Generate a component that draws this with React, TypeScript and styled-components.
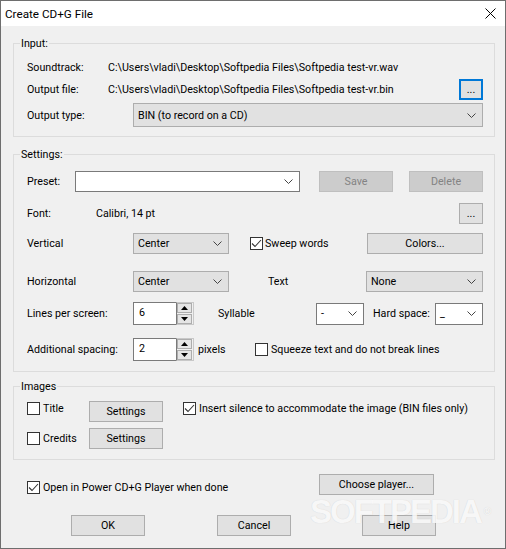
import React from "react";
import styled, { createGlobalStyle } from "styled-components";

const GlobalStyle = createGlobalStyle`
  html, body {
    margin: 0;
    padding: 0;
    background: #f0f0f0;
  }
  body {
    font-family: Roboto, "Liberation Sans", Arial, sans-serif;
    font-size: 10.7px;
    color: #000;
  }
  * {
    box-sizing: border-box;
  }
`;

const Window = styled.div`
  position: relative;
  width: 506px;
  height: 549px;
  border: 1px solid #6e6e6e;
  background: #f0f0f0;
  display: flex;
  flex-direction: column;
  overflow: hidden;
`;

const TitleBar = styled.div`
  height: 25px;
  flex: none;
  background: #fff;
  display: flex;
  align-items: center;
  justify-content: space-between;
  padding: 0 9px 0 4px;
  font-size: 11.7px;
`;

const Body = styled.div`
  padding: 10px 10px 0 12px;
  display: flex;
  flex-direction: column;
`;

const Group = styled.fieldset<{ $mt?: number }>`
  margin: ${(p) => p.$mt ?? 0}px 0 0;
  padding: 0 11px 0 6px;
  border: 1px solid #dcdcdc;
  min-width: 0;
`;

const Legend = styled.legend`
  padding: 0 1px;
  height: 15px;
  line-height: 15px;
`;

const Content = styled.div<{ $pt: number; $pb: number }>`
  padding: ${(p) => p.$pt}px 0 ${(p) => p.$pb}px 7px;
  display: flex;
  flex-direction: column;
`;

const Row = styled.div<{ $h: number; $mt?: number; $align?: string }>`
  display: flex;
  align-items: ${(p) => p.$align ?? "center"};
  height: ${(p) => p.$h}px;
  margin-top: ${(p) => p.$mt ?? 0}px;
`;

const Slot = styled.div<{ $w?: number; $ml?: number }>`
  flex: ${(p) => (p.$w ? "0 0 auto" : "1 1 auto")};
  width: ${(p) => (p.$w ? `${p.$w}px` : "auto")};
  margin-left: ${(p) => p.$ml ?? 0}px;
  white-space: nowrap;
  display: flex;
  align-items: center;
`;

const Footer = styled.div`
  padding-left: 14px;
  display: flex;
  flex-direction: column;
`;

const Button = styled.button<{ $w: number; $ml?: number; $focus?: boolean }>`
  flex: none;
  width: ${(p) => p.$w}px;
  height: 21px;
  margin: 0 0 0 ${(p) => p.$ml ?? 0}px;
  padding: 0;
  font: inherit;
  color: #000;
  background: #e1e1e1;
  border: ${(p) => (p.$focus ? "2px solid #0078d7" : "1px solid #adadad")};
  &:disabled {
    background: #cccccc;
    border-color: #bfbfbf;
    color: #838383;
  }
`;

const Combo = styled.div<{ $w?: number; $h?: number; $white?: boolean }>`
  flex: ${(p) => (p.$w ? "none" : "1 1 auto")};
  width: ${(p) => (p.$w ? `${p.$w}px` : "auto")};
  height: ${(p) => p.$h ?? 21}px;
  display: flex;
  align-items: center;
  justify-content: space-between;
  padding: 0 6px 0 4px;
  background: ${(p) => (p.$white ? "#fff" : "#e1e1e1")};
  border: 1px solid ${(p) => (p.$white ? "#7a7a7a" : "#adadad")};
`;

const Spinner = styled.div`
  flex: none;
  width: 61px;
  height: 23px;
  display: flex;
`;

const SpinField = styled.div`
  flex: 1;
  border: 1px solid #7a7a7a;
  border-right: none;
  background: #fff;
  padding: 3px 0 0 5px;
`;

const SpinArrows = styled.div`
  width: 18px;
  display: flex;
  flex-direction: column;
  gap: 1px;
  padding: 0 1px 0 0;
  border: 1px solid #c8c8c8;
  border-left: 1px solid #7a7a7a;
  background: #f0f0f0;
`;

const SpinButton = styled.div`
  flex: 1;
  display: flex;
  align-items: center;
  justify-content: center;
  background: #e5e5e5;
  border: 1px solid #adadad;
`;

const CheckLabel = styled.label<{ $gap?: number }>`
  display: flex;
  align-items: center;
  gap: ${(p) => p.$gap ?? 3}px;
  height: 15px;
  white-space: nowrap;
`;

const Box = styled.span`
  width: 13px;
  height: 13px;
  flex: none;
  border: 1px solid #333;
  background: #fff;
  display: flex;
  align-items: center;
  justify-content: center;
`;

const Watermark = styled.div`
  position: absolute;
  left: 309px;
  top: 494px;
  font-family: "Liberation Sans", Arial, sans-serif;
  font-weight: bold;
  font-size: 33px;
  line-height: 33px;
  letter-spacing: -2px;
  color: rgba(255, 255, 255, 0.85);
  text-shadow: 0 0 1px rgba(0, 0, 0, 0.15);
  pointer-events: none;
  sup {
    font-size: 10px;
    vertical-align: top;
    margin-left: 3px;
    letter-spacing: 0;
  }
`;

function Chevron() {
  return (
    <svg width="9" height="5" viewBox="0 0 9 5">
      <polyline points="0.5,0.5 4.5,4.5 8.5,0.5" fill="none" stroke="#444" strokeWidth="1" />
    </svg>
  );
}

function Check({ checked, children, gap }: { checked?: boolean; children: React.ReactNode; gap?: number }) {
  return (
    <CheckLabel $gap={gap}>
      <Box>
        {checked && (
          <svg width="11" height="11" viewBox="0 0 11 11">
            <polyline points="1,5.5 4,8.5 10,2" fill="none" stroke="#333" strokeWidth="1.1" />
          </svg>
        )}
      </Box>
      {children}
    </CheckLabel>
  );
}

function Spin({ value }: { value: string }) {
  return (
    <Spinner>
      <SpinField>{value}</SpinField>
      <SpinArrows>
        <SpinButton>
          <svg width="7" height="4" viewBox="0 0 7 4">
            <polygon points="0,4 3.5,0 7,4" fill="#000" />
          </svg>
        </SpinButton>
        <SpinButton>
          <svg width="7" height="4" viewBox="0 0 7 4">
            <polygon points="0,0 3.5,4 7,0" fill="#000" />
          </svg>
        </SpinButton>
      </SpinArrows>
    </Spinner>
  );
}

function Select({ w, h, white, children }: { w?: number; h?: number; white?: boolean; children?: React.ReactNode }) {
  return (
    <Combo $w={w} $h={h} $white={white}>
      <span>{children}</span>
      <Chevron />
    </Combo>
  );
}

export default function App() {
  return (
    <Window>
      <GlobalStyle />
      <TitleBar>
        <span>Create CD+G File</span>
        <svg width="11" height="11" viewBox="0 0 11 11">
          <path d="M0.5 0.5 L10.5 10.5 M10.5 0.5 L0.5 10.5" stroke="#000" strokeWidth="1" />
        </svg>
      </TitleBar>
      <Body>
        <Group>
          <Legend>Input:</Legend>
          <Content $pt={6} $pb={9}>
            <Row $h={20}>
              <Slot $w={81}>Soundtrack:</Slot>
              <Slot>C:\Users\vladi\Desktop\Softpedia Files\Softpedia test-vr.wav</Slot>
            </Row>
            <Row $h={21} $mt={2}>
              <Slot $w={81}>Output file:</Slot>
              <Slot>C:\Users\vladi\Desktop\Softpedia Files\Softpedia test-vr.bin</Slot>
              <Button $w={24} $focus>...</Button>
            </Row>
            <Row $h={24} $mt={3}>
              <Slot $w={106}>Output type:</Slot>
              <Select h={24}>BIN (to record on a CD)</Select>
            </Row>
          </Content>
        </Group>

        <Group $mt={10}>
          <Legend>Settings:</Legend>
          <Content $pt={9} $pb={10}>
            <Row $h={21}>
              <Slot $w={48}>Preset:</Slot>
              <Select w={225} white />
              <Button $w={74} $ml={19} disabled>Save</Button>
              <Button $w={74} $ml={16} disabled>Delete</Button>
            </Row>
            <Row $h={21} $mt={11}>
              <Slot $w={69}>Font:</Slot>
              <Slot>Calibri, 14 pt</Slot>
              <Button $w={24}>...</Button>
            </Row>
            <Row $h={21} $mt={9}>
              <Slot $w={106}>Vertical</Slot>
              <Select w={96}>Center</Select>
              <Slot $w={117} $ml={21}>
                <Check checked gap={2}>Sweep words</Check>
              </Slot>
              <Button $w={116}>Colors...</Button>
            </Row>
            <Row $h={21} $mt={17}>
              <Slot $w={106}>Horizontal</Slot>
              <Select w={96}>Center</Select>
              <Slot $w={98} $ml={39}>Text</Slot>
              <Select w={117}>None</Select>
            </Row>
            <Row $h={23} $mt={10}>
              <Slot $w={106}>Lines per screen:</Slot>
              <Spin value="6" />
              <Slot $w={98} $ml={24}>Syllable</Slot>
              <Select w={48} h={22} white>-</Select>
              <Slot $w={62} $ml={9}>Hard space:</Slot>
              <Select w={48} h={22} white>_</Select>
            </Row>
            <Row $h={23} $mt={13}>
              <Slot $w={106}>Additional spacing:</Slot>
              <Spin value="2" />
              <Slot $w={57} $ml={4}>pixels</Slot>
              <Check>Squeeze text and do not break lines</Check>
            </Row>
          </Content>
        </Group>

        <Group $mt={7}>
          <Legend>Images</Legend>
          <Content $pt={7} $pb={10}>
            <Row $h={21} $align="flex-start">
              <Slot $w={62}>
                <Check>Title</Check>
              </Slot>
              <Button $w={74}>Settings</Button>
              <Slot $ml={20}>
                <Check checked>Insert silence to accommodate the image (BIN files only)</Check>
              </Slot>
            </Row>
            <Row $h={21} $mt={6}>
              <Slot $w={62}>
                <Check>Credits</Check>
              </Slot>
              <Button $w={74}>Settings</Button>
            </Row>
          </Content>
        </Group>

        <Footer>
          <Row $h={21} $mt={14} $align="flex-end">
            <Slot $w={292}>
              <Check checked>Open in Power CD+G Player when done</Check>
            </Slot>
            <Button $w={115}>Choose player...</Button>
          </Row>
          <Row $h={21} $mt={20}>
            <Button $w={74} $ml={44}>OK</Button>
            <Button $w={74} $ml={72}>Cancel</Button>
            <Button $w={74} $ml={71}>Help</Button>
          </Row>
        </Footer>
      </Body>
      <Watermark>
        SOFTPEDIA<sup>®</sup>
      </Watermark>
    </Window>
  );
}
